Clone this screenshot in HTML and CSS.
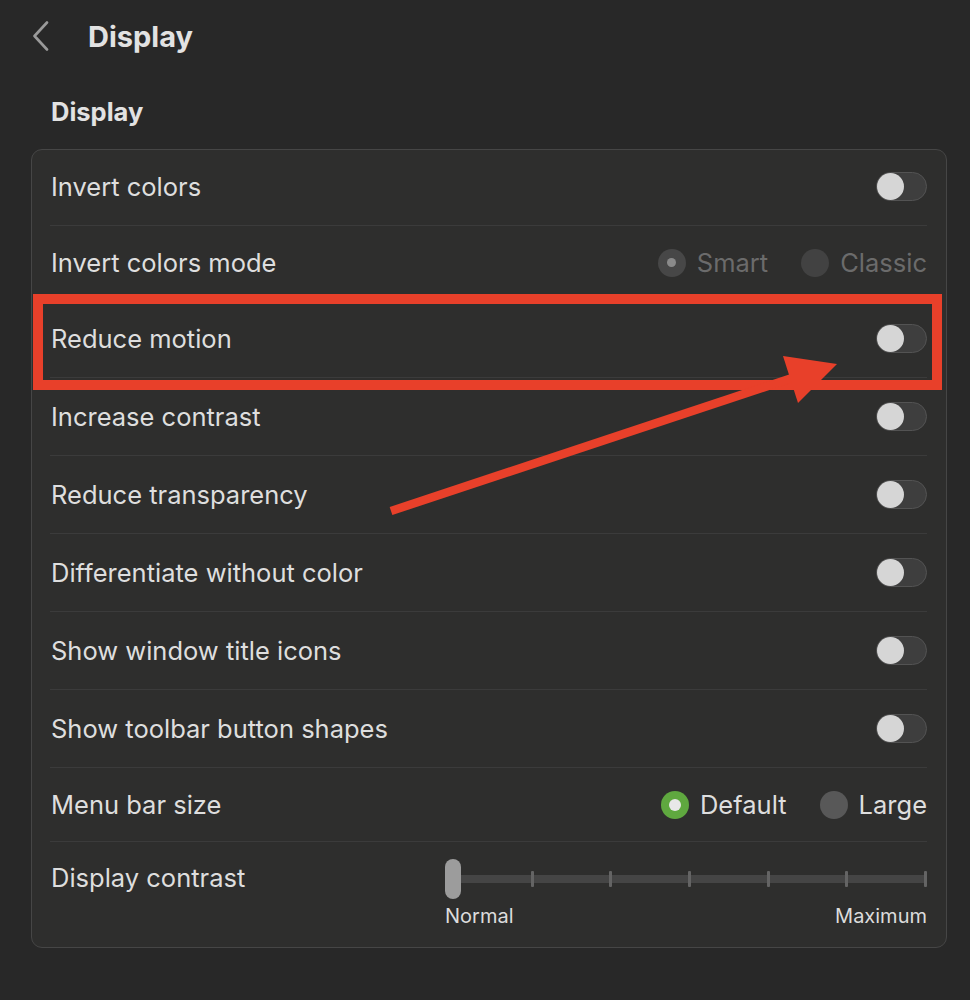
FILE: index.html
```html
<!DOCTYPE html>
<html lang="en">
<head>
<meta charset="utf-8">
<title>Display</title>
<link rel="stylesheet" href="styles.css">
</head>
<body>
<div class="page">
  <header class="header">
    <svg class="chevron" width="18" height="30" viewBox="0 0 18 30"><path d="M15 1.5 L2.5 15 L15 28.5" fill="none" stroke="#9a9a9a" stroke-width="2.6" stroke-linecap="round" stroke-linejoin="round"/></svg>
    <h1 class="title">Display</h1>
  </header>
  <h2 class="section">Display</h2>
  <div class="card">
    <div class="row first"><span class="label">Invert colors</span><span class="toggle"><span class="knob"></span></span></div>
    <div class="row radio-row"><span class="label">Invert colors mode</span>
      <div class="radios disabled">
        <span class="opt"><span class="radio dis-on"><span class="dot"></span></span>Smart</span>
        <span class="opt"><span class="radio dis-off"></span>Classic</span>
      </div>
    </div>
    <div class="row"><span class="label">Reduce motion</span><span class="toggle"><span class="knob"></span></span></div>
    <div class="row"><span class="label">Increase contrast</span><span class="toggle"><span class="knob"></span></span></div>
    <div class="row"><span class="label">Reduce transparency</span><span class="toggle"><span class="knob"></span></span></div>
    <div class="row"><span class="label">Differentiate without color</span><span class="toggle"><span class="knob"></span></span></div>
    <div class="row"><span class="label">Show window title icons</span><span class="toggle"><span class="knob"></span></span></div>
    <div class="row"><span class="label">Show toolbar button shapes</span><span class="toggle"><span class="knob"></span></span></div>
    <div class="row radio-row"><span class="label">Menu bar size</span>
      <div class="radios">
        <span class="opt"><span class="radio on"><span class="dot"></span></span>Default</span>
        <span class="opt"><span class="radio off"></span>Large</span>
      </div>
    </div>
    <div class="row last"><span class="label">Display contrast</span>
      <div class="slider">
        <div class="track-wrap">
          <div class="track"></div>
          <div class="ticks"><i></i><i></i><i></i><i></i><i></i><i></i><i></i></div>
          <div class="thumb"></div>
        </div>
        <div class="slider-labels"><span>Normal</span><span>Maximum</span></div>
      </div>
    </div>
  </div>
</div>
<svg class="annot" width="970" height="1000" viewBox="0 0 970 1000">
  <rect x="38" y="299" width="899" height="86" fill="none" stroke="#e8402a" stroke-width="10"/>
  <line x1="391" y1="511" x2="795" y2="377" stroke="#e8402a" stroke-width="8.5"/>
  <polygon points="837,364 783,356 798,403" fill="#e8402a"/>
</svg>
</body>
</html>
```
FILE: styles.css
```css
html, body {
  margin: 0;
  padding: 0;
  background: #282828;
}
body {
  width: 970px;
  height: 1000px;
  overflow: hidden;
  position: relative;
  font-family: "Inter", "Liberation Sans", sans-serif;
  color: #dedede;
}
.page {
  display: flex;
  flex-direction: column;
}
.header {
  height: 72px;
  display: flex;
  align-items: center;
  padding-left: 32px;
}
.chevron {
  display: block;
}
.title {
  margin: 0 0 0 38px;
  font-size: 29px;
  font-weight: 700;
  color: #e2e2e2;
}
.section {
  margin: 25px 0 22px 51px;
  font-size: 25.5px;
  line-height: 30px;
  font-weight: 700;
  color: #e2e2e2;
}
.card {
  margin-left: 31px;
  width: 916px;
  box-sizing: border-box;
  border: 1px solid #464646;
  border-radius: 11px;
  background: #2e2e2d;
}
.row {
  margin: 0 19px 0 18px;
  height: 77px;
  border-bottom: 1px solid #3b3b3b;
  display: flex;
  align-items: center;
  justify-content: space-between;
}
.row.first {
  height: 76px;
  box-sizing: border-box;
  padding-bottom: 3px;
}
.row.radio-row { height: 73px; }
.row.last {
  border-bottom: none;
  height: 105px;
  align-items: flex-start;
}
.label {
  font-size: 25.5px;
  padding-left: 1px;
  color: #dedede;
}
.row.last .label {
  margin-top: 20px;
}
.toggle {
  width: 51px;
  height: 29px;
  box-sizing: border-box;
  border-radius: 15px;
  background: #3e3e3e;
  border: 1px solid #535353;
  display: flex;
  align-items: center;
}
.knob {
  width: 27px;
  height: 27px;
  border-radius: 50%;
  background: #d6d6d6;
}
.radios {
  display: flex;
  gap: 33px;
  font-size: 25.5px;
  color: #dedede;
}
.radios.disabled {
  color: #6b6b6b;
}
.opt {
  display: flex;
  align-items: center;
  gap: 11px;
}
.radio {
  width: 28px;
  height: 28px;
  border-radius: 50%;
  display: flex;
  align-items: center;
  justify-content: center;
  box-sizing: border-box;
}
.radio.on {
  background: #5fa83f;
}
.radio.on .dot {
  width: 12px;
  height: 12px;
  border-radius: 50%;
  background: #e8e8e8;
}
.radio.off {
  background: #585858;
}
.radio.dis-on {
  background: #474747;
}
.radio.dis-on .dot {
  width: 9px;
  height: 9px;
  border-radius: 50%;
  background: #8a8a8a;
}
.radio.dis-off {
  background: #424242;
}
.slider {
  width: 482px;
  margin-top: 17px;
  display: flex;
  flex-direction: column;
}
.track-wrap {
  position: relative;
  height: 40px;
}
.track {
  position: absolute;
  left: 8px;
  right: 0;
  top: 16px;
  height: 8px;
  border-radius: 2px;
  background: #454545;
}
.ticks {
  position: absolute;
  left: 7px;
  right: 0;
  top: 12px;
  height: 16px;
  display: flex;
  justify-content: space-between;
}
.ticks i {
  display: block;
  width: 3px;
  height: 16px;
  border-radius: 1px;
  background: #646464;
}
.thumb {
  position: absolute;
  left: 0;
  top: 0;
  width: 16px;
  height: 40px;
  border-radius: 8px;
  background: #9c9c9c;
}
.slider-labels {
  display: flex;
  justify-content: space-between;
  font-size: 20px;
  color: #dcdcdc;
  margin-top: 4px;
  line-height: 26px;
}
.annot {
  position: absolute;
  left: 0;
  top: 0;
  pointer-events: none;
}
```
